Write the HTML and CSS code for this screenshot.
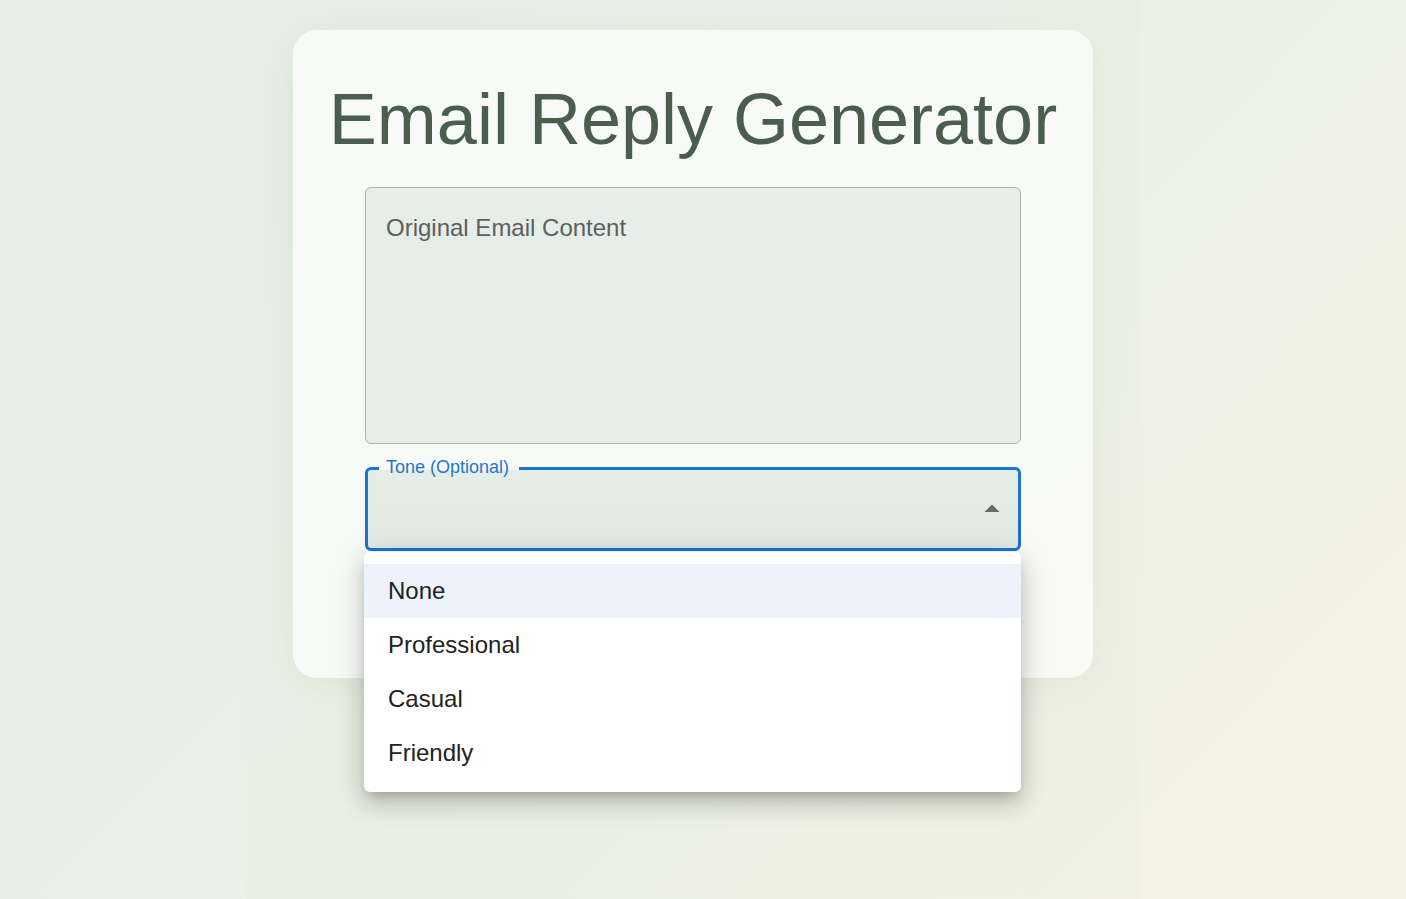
FILE: index.html
```html
<!DOCTYPE html>
<html lang="en">
<head>
<meta charset="utf-8">
<title>Email Reply Generator</title>
<link rel="stylesheet" href="styles.css">
</head>
<body>
<div class="page">
  <div class="column">
    <main class="card">
      <h1 class="title">Email Reply Generator</h1>
      <div class="field multiline">
        <label class="field-label">Original Email Content</label>
        <textarea class="textarea" rows="6"></textarea>
      </div>
      <div class="field select focused">
        <span class="notch-label">Tone (Optional)</span>
        <div class="select-box">
          <svg class="arrow" viewBox="0 0 24 24" width="36" height="36"><path d="M7 14l5-5 5 5z" fill="currentColor"/></svg>
        </div>
        <ul class="menu">
          <li class="menu-item selected">None</li>
          <li class="menu-item">Professional</li>
          <li class="menu-item">Casual</li>
          <li class="menu-item">Friendly</li>
        </ul>
      </div>
      <button class="generate">Generate Reply</button>
    </main>
  </div>
</div>
</body>
</html>
```

FILE: styles.css
```css
* { box-sizing: border-box; }
html, body { margin: 0; padding: 0; height: 100%; }
body {
  font-family: "Liberation Sans", Arial, sans-serif;
  background: linear-gradient(135deg, #e6eee7 0%, #ecf0e6 50%, #f3f2e4 100%);
  overflow: hidden;
}
.page {
  min-height: 100vh;
  display: flex;
  justify-content: center;
  padding-right: 20px;
}
.column {
  width: 895px;
  min-height: 100vh;
  padding-top: 30px;
  display: flex;
  justify-content: center;
  align-items: flex-start;
  background: rgba(120, 140, 120, 0.01);
}
.card {
  width: 800px;
  height: 648px;
  background: rgba(250, 251, 249, 0.9);
  border-radius: 24px;
  padding: 47px 72px 48px;
  box-shadow: 0 8px 40px rgba(60, 80, 60, 0.06);
  display: flex;
  flex-direction: column;
  align-items: stretch;
}
.card > * { flex-shrink: 0; }
.title {
  margin: 0 -40px 26px;
  font-weight: 400;
  font-size: 72px;
  line-height: 84px;
  color: #4b5d4e;
  text-align: center;
  white-space: nowrap;
}
.field { position: relative; }
.multiline {
  height: 257px;
  border: 1px solid #aeb3ae;
  border-radius: 6px;
  background: #e5eee8;
}
.field-label {
  position: absolute;
  left: 20px;
  top: 23px;
  font-size: 24px;
  line-height: 34.5px;
  color: #5d605d;
}
.textarea {
  width: 100%;
  height: 100%;
  border: 0;
  background: transparent;
  resize: none;
  outline: none;
  font: inherit;
}
.select { margin-top: 23px; }
.select-box {
  height: 84px;
  border: 3px solid #1b74cf;
  border-radius: 6px;
  background: linear-gradient(180deg, #e4ede7 0%, #e1e9e3 100%);
  display: flex;
  align-items: center;
  justify-content: flex-end;
  padding-right: 8px;
}
.arrow { color: #666a67; display: block; }
.notch-label {
  position: absolute;
  left: 14px;
  top: -12px;
  padding: 0 10px 0 7px;
  font-size: 18px;
  line-height: 25px;
  color: #1f76cf;
  background: linear-gradient(180deg, #f8faf8 0px, #f8faf8 15px, #e4ede7 15px, #e4ede7 100%);
  z-index: 1;
}
.menu {
  position: absolute;
  left: -1px;
  right: 0;
  top: 85px;
  margin: 0;
  padding: 12px 0;
  list-style: none;
  background: #fff;
  border-radius: 6px;
  box-shadow: 0 7px 12px -6px rgba(0,0,0,0.25), 0 12px 22px 2px rgba(0,0,0,0.12), 0 5px 30px 6px rgba(0,0,0,0.08);
  z-index: 5;
}
.menu-item {
  height: 54px;
  padding: 9px 24px;
  font-size: 24px;
  line-height: 36px;
  color: #222;
}
.menu-item.selected { background: #ecf3fb; }
.generate {
  margin-top: 24px;
  height: 63px;
  border: 0;
  border-radius: 6px;
  background: #4b5d4e;
  color: #fff;
  font: inherit;
  font-size: 21px;
}
```
